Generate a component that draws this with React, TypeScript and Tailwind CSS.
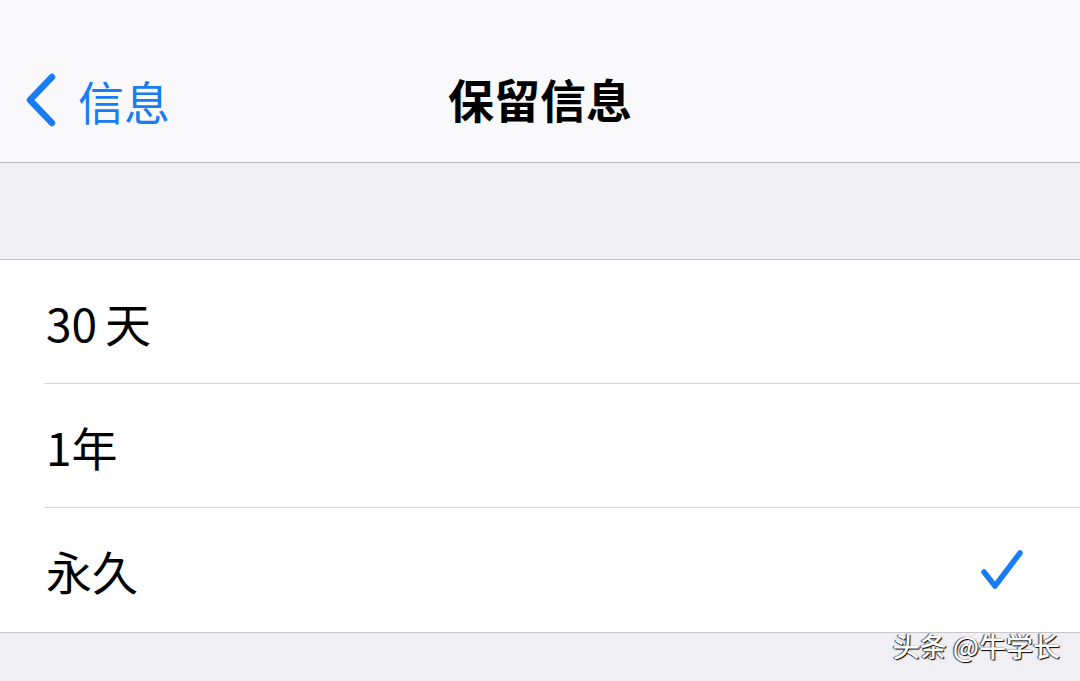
import React from 'react';

const options = [
  { num: '30', unit: '天' },
  { num: '1', unit: '年' },
  { num: '', unit: '永久' },
];

export default function App() {
  const selected = 2;
  return (
    <div
      className="w-[1080px] h-[681px] bg-[#efeff4] overflow-hidden relative"
      style={{ fontFamily: '"Noto Sans CJK SC", "Noto Sans", sans-serif' }}
    >
      {/* Navigation bar */}
      <div className="h-[163px] bg-[#f9f9fb] border-b border-[#b8b8bc] relative flex items-center">
        <div className="flex items-center pl-[24px] text-[#1a7cf5] mt-[38px]">
          <svg width="34" height="54" viewBox="0 0 34 54" fill="none">
            <path d="M28 4 L6 27 L28 50" stroke="#1a7cf5" strokeWidth="6.5" strokeLinecap="round" strokeLinejoin="round" />
          </svg>
          <span className="ml-[20px] text-[46px] leading-none">信息</span>
        </div>
        <div className="absolute left-0 right-0 top-[75px] text-center text-[46px] font-bold leading-none text-black">
          保留信息
        </div>
      </div>

      {/* Spacer section */}
      <div className="h-[96px]" />

      {/* Options list */}
      <div className="bg-white border-t border-b border-[#c8c8cc]">
        {options.map((opt, i) => (
          <div key={opt.num + opt.unit} className="pl-[44px]">
            <div
              className={
                'h-[124px] flex items-center justify-between pr-[56px] ' +
                (i < options.length - 1 ? 'border-b border-[#d4d4d8]' : '')
              }
            >
              <span className="text-[46px] leading-none text-black ml-[2px] flex">
                {opt.num && <span className={opt.num.length > 1 ? 'mr-[8px]' : ''}>{opt.num}</span>}
                <span>{opt.unit}</span>
              </span>
              {i === selected && (
                <svg width="44" height="42" viewBox="0 0 44 42" fill="none">
                  <path d="M4 23 L15 37 L40 4" stroke="#1a7cf5" strokeWidth="5.5" strokeLinecap="round" strokeLinejoin="round" />
                </svg>
              )}
            </div>
          </div>
        ))}
      </div>

      {/* Watermark */}
      <div
        className="absolute right-[20px] top-[632px] text-[27px] font-medium text-white leading-none"
        style={{ textShadow: '1px 1px 1px #000, -1px 0 1px #333' }}
      >
        头条 @牛学长
      </div>
    </div>
  );
}
